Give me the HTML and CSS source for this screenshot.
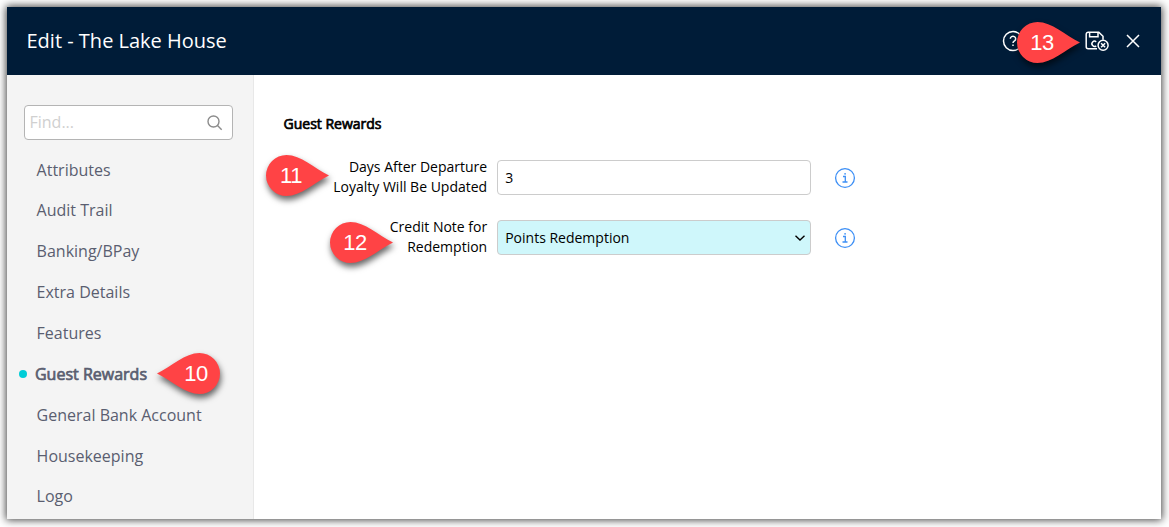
FILE: index.html
```
<!DOCTYPE html>
<html lang="en">
  <head>
    <meta charset="UTF-8" />
    <title>Edit - The Lake House</title>
    <link rel="stylesheet" href="styles.css">
  </head>

  <body>
    <div class="window">
      <header class="titlebar">
        <h1>Edit - The Lake House</h1>
        <div class="actions">
          <svg class="icon-help" width="22" height="22" viewBox="0 0 22 22">
            <circle cx="11" cy="11" r="9.5" />
            <path d="M8.3 8.8a2.7 2.5 0 1 1 4.2 2.1c-1 .7-1.5 1.1-1.5 2.1M11 14.6v1.4" />
          </svg>
          <svg class="icon-save" width="26" height="22" viewBox="0 0 26 22">
            <path d="M13 18.8H4.2a2 2 0 0 1-2-2V4.2a2 2 0 0 1 2-2h10.6l4.2 4v3.6M5.6 2.5v4.3H14V2.5" />
            <path d="M12.2 11.8a2.6 2.6 0 1 0 0 4" />
            <circle cx="19.1" cy="15.200" r="5" />
            <path d="M17.1 13.2l4 4M21.1 13.2l-4 4" />
          </svg>
          <svg class="icon-close" width="16" height="16" viewBox="0 0 16 16">
            <path d="M2 2l12 12M14 2L2 14" />
          </svg>
        </div>
      </header>

      <div class="content">
        <nav class="sidebar">
          <label class="search">
            <input type="text" placeholder="Find..." />
            <svg width="16" height="16" viewBox="0 0 16 16">
              <circle cx="6.5" cy="6.5" r="5.5" />
              <path d="M10.5 10.5l4.2 4.2" />
            </svg>
          </label>
          <ul class="menu">
            <li>Attributes</li>
            <li>Audit Trail</li>
            <li>Banking/BPay</li>
            <li>Extra Details</li>
            <li>Features</li>
            <li class="active">Guest Rewards</li>
            <li>General Bank Account</li>
            <li>Housekeeping</li>
            <li>Logo</li>
          </ul>
        </nav>

        <main class="form">
          <h2>Guest Rewards</h2>
          <div class="field">
            <label for="days">Days After Departure<br />Loyalty Will Be Updated</label>
            <input id="days" class="control" type="text" value="3" />
            <svg class="info" width="22" height="22" viewBox="0 0 22 22">
              <circle cx="11" cy="11" r="9.4" />
              <path d="M9 9.5h2.3V15M8.5 15h5M10.2 6.800h1.800" />
            </svg>
          </div>
          <div class="field">
            <label>Credit Note for<br />Redemption</label>
            <div class="control select">
              <span>Points Redemption</span>
              <svg width="12" height="8" viewBox="0 0 12 8">
                <path d="M1.5 1.8L6 6l4.5-4.2" />
              </svg>
            </div>
            <svg class="info" width="22" height="22" viewBox="0 0 22 22">
              <circle cx="11" cy="11" r="9.4" />
              <path d="M9 9.5h2.3V15M8.5 15h5M10.2 6.800h1.800" />
            </svg>
          </div>
        </main>
      </div>
    </div>

    <div class="pin pin-left pin-10">
      <svg width="63" height="41" viewBox="0 0 63 41"><path d="M63 20.5C48 13 35 0 20.5 0a20.5 20.5 0 0 0 0 41C35 41 48 28 63 20.5z" /></svg>
      <span>10</span>
    </div>
    <div class="pin pin-11">
      <svg width="63" height="41" viewBox="0 0 63 41"><path d="M63 20.5C48 13 35 0 20.5 0a20.5 20.5 0 0 0 0 41C35 41 48 28 63 20.5z" /></svg>
      <span>11</span>
    </div>
    <div class="pin pin-12">
      <svg width="63" height="41" viewBox="0 0 63 41"><path d="M63 20.5C48 13 35 0 20.5 0a20.5 20.5 0 0 0 0 41C35 41 48 28 63 20.5z" /></svg>
      <span>12</span>
    </div>
    <div class="pin pin-13">
      <svg width="63" height="41" viewBox="0 0 63 41"><path d="M63 20.5C48 13 35 0 20.5 0a20.5 20.5 0 0 0 0 41C35 41 48 28 63 20.5z" /></svg>
      <span>13</span>
    </div>
  </body>
</html>
```
FILE: styles.css
```
* {
  box-sizing: border-box;
}

body {
  margin: 0;
  padding: 7px 8px 8px 7px;
  height: 527px;
  overflow: hidden;
  background: white;
  font-family: "Open Sans", "Noto Sans", sans-serif;
  font-size: 14px;
  color: black;
}

svg {
  fill: none;
  stroke: currentColor;
  flex: none;
}

.window {
  display: flex;
  flex-direction: column;
  height: 512px;
  background: white;
  box-shadow: 0 0 8px 1px rgba(0, 0, 0, 0.75);
}

.titlebar {
  display: flex;
  align-items: center;
  justify-content: space-between;
  height: 68px;
  padding: 0 20px 0 19.5px;
  background: #001c38;
  color: white;
}

h1 {
  margin: 0;
  padding-bottom: 2px;
  font-size: 20px;
  font-weight: 400;
}

.actions {
  display: flex;
  align-items: center;
}

.icon-help {
  margin-right: 60px;
  stroke-width: 1.5;
}

.icon-save {
  margin-right: 15px;
  stroke-width: 1.5;
}

.icon-close {
  stroke-width: 1.5;
}

.content {
  display: flex;
  flex: 1;
  min-height: 0;
}

.sidebar {
  width: 247px;
  padding: 30px 20px 0 17px;
  background: #f4f4f4;
  border-right: 1px solid #e8e8e8;
  overflow: hidden;
}

.search {
  display: flex;
  align-items: center;
  width: 209px;
  height: 35px;
  padding: 0 9px 0 4.5px;
  background: white;
  border: 1px solid #b4b4b4;
  border-radius: 4px;
  color: #8c8c8c;
}

.search svg {
  stroke-width: 1.4;
}

.search input {
  flex: 1;
  min-width: 0;
  padding: 0 0 2px;
  border: 0;
  font: inherit;
  font-size: 16px;
}

.search input::placeholder {
  color: #d0d0d0;
}

.menu {
  margin: 9.6px 0 0;
  padding: 0 0 0 12.6px;
  list-style: none;
  font-size: 16px;
  color: #5a5e70;
}

.menu li {
  height: 40.85px;
  line-height: 40.8px;
  white-space: nowrap;
}

.menu .active {
  display: flex;
  align-items: center;
  gap: 8.4px;
  margin-left: -18px;
  -webkit-text-stroke: 0.7px currentColor;
}

.menu .active::before {
  content: "";
  width: 8px;
  height: 8px;
  border-radius: 50%;
  background: #00cdd7;
}

.form {
  flex: 1;
  padding: 39px 0 0 29.5px;
}

h2 {
  margin: 0 0 26px;
  font-size: 14px;
  font-weight: 400;
  line-height: 20px;
  -webkit-text-stroke: 0.7px currentColor;
}

.field {
  display: flex;
  align-items: center;
  height: 35px;
  margin-bottom: 25px;
}

.field label {
  width: 203.7px;
  margin-right: 9.8px;
  padding-bottom: 2px;
  line-height: 20px;
  text-align: right;
}

.control {
  width: 314px;
  height: 35px;
  padding: 0 7.2px;
  border: 1px solid #ccc;
  border-radius: 4px;
  font: inherit;
}

.select {
  display: flex;
  align-items: center;
  justify-content: space-between;
  padding-right: 4px;
  background: #cff7fb;
}

.select svg {
  stroke-width: 1.4;
}

.info {
  margin-left: 23px;
  color: #3d8ff5;
  stroke-width: 1.3;
}

/* numbered callouts over the window */
.pin {
  position: absolute;
  width: 63px;
  height: 41px;
  color: white;
  font: 22px/41px "Liberation Sans", Arial, sans-serif;
  letter-spacing: -0.5px;
}

.pin svg {
  position: absolute;
  top: 0;
  left: 0;
  overflow: visible;
  fill: #ff4345;
  stroke: none;
  filter: drop-shadow(1px 4px 3px rgba(0, 0, 0, 0.6));
}

.pin span {
  position: absolute;
  left: 12px;
  width: 26px;
  text-align: center;
}

.pin-left svg {
  transform: scaleX(-1);
  filter: drop-shadow(-1px 4px 3px rgba(0, 0, 0, 0.6));
}

.pin-left span {
  left: 26px;
}

.pin-10 {
  left: 157px;
  top: 353px;
}

.pin-11 {
  left: 266px;
  top: 155px;
}

.pin-12 {
  left: 330px;
  top: 222px;
}

.pin-13 {
  left: 1017px;
  top: 22px;
}
```
